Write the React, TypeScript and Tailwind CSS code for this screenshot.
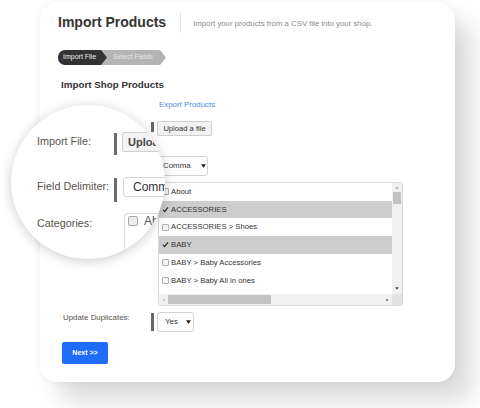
import React from "react";

const Tri = ({ className = "" }: { className?: string }) => (
  <svg viewBox="0 0 6 4" className={className}>
    <path d="M0 0h6L3 4z" fill="currentColor" />
  </svg>
);

const Check = () => (
  <svg viewBox="0 0 8 8" className="w-[7px] h-[7px]">
    <path d="M1.2 4.3 3.1 6.2 6.8 1.6" fill="none" stroke="#333" strokeWidth="1.5" />
  </svg>
);

const rows = [
  { t: "About", c: false },
  { t: "ACCESSORIES", c: true },
  { t: "ACCESSORIES > Shoes", c: false },
  { t: "BABY", c: true },
  { t: "BABY > Baby Accessories", c: false },
  { t: "BABY > Baby All in ones", c: false },
];

export default function App() {
  return (
    <div className="relative w-[480px] h-[408px] bg-white overflow-hidden font-['Liberation_Sans',Arial,sans-serif] text-[#333]">
      <div className="pt-[2px] pl-[40px]">
        <div className="w-[415px] h-[380px] bg-white rounded-[18px] shadow-[0_0_8px_rgba(0,0,0,0.06),18px_20px_24px_rgba(0,0,0,0.14)] pl-[18px] pt-[10px]">
          {/* header */}
          <div className="flex items-center h-[21px]">
            <div className="text-[14px] leading-[17px] font-bold text-[#333]">Import Products</div>
            <div className="ml-[14px] w-px h-[21px] bg-[#e6e6e6]" />
            <div className="ml-[12px] mt-[3px] text-[7.8px] leading-[10px] text-[#8a8a8a]">
              Import your products from a CSV file into your shop.
            </div>
          </div>
          {/* breadcrumb */}
          <div className="flex mt-[17px] h-[15px]">
            <div className="relative z-10 h-[15px] w-[49px] bg-[#333] rounded-l-[7px] pl-[5px] flex items-center text-[7px] text-[#eee] [clip-path:polygon(0_0,calc(100%-6px)_0,100%_50%,calc(100%-6px)_100%,0_100%)]">
              Import File
            </div>
            <div className="-ml-[6px] h-[15px] w-[65px] bg-[#b4b4b4] pl-[12px] flex items-center text-[7px] text-[#e4e4e4] [clip-path:polygon(0_0,calc(100%-6px)_0,100%_50%,calc(100%-6px)_100%,0_100%)]">
              Select Fields
            </div>
          </div>
          <div className="mt-[14px] ml-[3px] text-[9.8px] leading-[12px] font-bold text-[#333]">Import Shop Products</div>

          {/* form */}
          <div className="ml-[5px]">
            <div className="flex mt-[9px]">
              <div className="w-[88px] shrink-0" />
              <div className="w-[3px] shrink-0" />
              <div className="ml-[5px] text-[7.9px] leading-[10px] text-[#4a8ee6]">Export Products</div>
            </div>

            <div className="flex mt-[11px] h-[15px]">
              <div className="w-[88px] shrink-0 text-[7.9px] text-[#555]">Import File:</div>
              <div className="w-[3px] shrink-0 h-[10px] mt-[1px] bg-[#666]" />
              <div className="ml-[3px] h-[15px] w-[55px] border border-[#cfcfcf] bg-[#f1f1f1] rounded-[2px] flex items-center justify-center text-[7.6px] text-[#333] whitespace-nowrap">
                Upload a file
              </div>
            </div>

            <div className="flex mt-[20px] h-[20px]">
              <div className="w-[88px] shrink-0 text-[7.9px] text-[#555]">Field Delimiter:</div>
              <div className="w-[3px] shrink-0 h-[18px] mt-[1px] bg-[#666]" />
              <div className="ml-[3px] h-[20px] w-[51px] border border-[#d4d4d4] bg-white rounded-[3px] flex items-center pl-[5px] text-[7.9px] text-[#333]">
                Comma
                <Tri className="ml-[10px] w-[5px] h-[4px] text-[#222]" />
              </div>
            </div>

            <div className="flex mt-[6px]">
              <div className="w-[88px] shrink-0 text-[7.9px] text-[#555]">Categories:</div>
              <div className="w-[3px] shrink-0" />
              <div className="ml-[4px] w-[245px] h-[124px] border border-[#dadada] rounded-[3px] flex flex-col overflow-hidden">
                <div className="flex flex-1 min-h-0">
                  <div className="flex-1">
                    {rows.map((r) => (
                      <div
                        key={r.t}
                        className={
                          "h-[17.7px] flex items-center pl-[3px] text-[7.7px] text-[#333] " +
                          (r.c ? "bg-[#cdcdcd]" : "bg-white")
                        }
                      >
                        {r.c ? (
                          <div className="w-[7px] h-[7px] flex items-center justify-center">
                            <Check />
                          </div>
                        ) : (
                          <div className="w-[7px] h-[7px] border border-[#b0b0b0] bg-[#f4f4f4] rounded-[1px]" />
                        )}
                        <span className="ml-[2px]">{r.t}</span>
                      </div>
                    ))}
                  </div>
                  <div className="w-[10px] bg-[#f1f1f1] flex flex-col items-center">
                    <Tri className="mt-[3px] w-[4px] h-[3px] rotate-180 text-[#b5b5b5]" />
                    <div className="mt-[3px] w-[8px] h-[12px] bg-[#c2c2c2]" />
                    <div className="flex-1" />
                    <Tri className="mb-[4px] w-[4px] h-[3px] text-[#555]" />
                  </div>
                </div>
                <div className="h-[11px] flex bg-[#f1f1f1] items-center">
                  <div className="w-[9px] flex justify-center">
                    <Tri className="w-[3px] h-[4px] rotate-90 text-[#b5b5b5]" />
                  </div>
                  <div className="w-[103px] h-[9px] bg-[#c2c2c2]" />
                  <div className="flex-1" />
                  <div className="w-[10px] flex justify-center">
                    <Tri className="w-[3px] h-[4px] -rotate-90 text-[#555]" />
                  </div>
                  <div className="w-[10px] h-[11px] bg-[#e2e2e2]" />
                </div>
              </div>
            </div>

            <div className="flex mt-[6px] h-[20px]">
              <div className="w-[88px] shrink-0 pt-[1px] text-[7.9px] leading-[10px] text-[#5a534c]">Update Duplicates:</div>
              <div className="w-[3px] shrink-0 h-[18px] mt-[1px] bg-[#666]" />
              <div className="ml-[3px] h-[20px] w-[37px] border border-[#d4d4d4] bg-white rounded-[3px] flex items-center pl-[7px] text-[7.9px] text-[#333]">
                Yes
                <Tri className="ml-[8px] w-[5px] h-[4px] text-[#222]" />
              </div>
            </div>

            <div className="mt-[10px] -ml-[1px] w-[46px] h-[22px] bg-[#1f6cfb] rounded-[2px] flex items-center justify-center text-[7px] font-bold text-white">
              Next &gt;&gt;
            </div>
          </div>
        </div>
      </div>

      {/* magnifier */}
      <div className="absolute left-[11px] top-[105px] w-[154px] h-[154px] rounded-full bg-white overflow-hidden shadow-[0_2px_12px_rgba(0,0,0,0.2)]">
        <div className="pl-[26px] pt-[27px] w-[260px]">
          <div className="flex h-[22px]">
            <div className="w-[77px] shrink-0 mt-[2.5px] text-[10.8px] leading-[13px] text-[#5a534c] whitespace-nowrap">Import File:</div>
            <div className="w-[3px] shrink-0 h-[22px] mt-[1px] bg-[#6a6a6a]" />
            <div className="ml-[5px] shrink-0 h-[20px] px-[5px] border border-[#cfcfcf] bg-[#f3f3f3] rounded-[2px] flex items-center text-[11px] font-bold text-[#444] whitespace-nowrap">
              Upload a file
            </div>
          </div>
          <div className="flex mt-[23px] h-[25px]">
            <div className="w-[77px] shrink-0 mt-[2.5px] text-[10.8px] leading-[13px] text-[#5a534c] whitespace-nowrap">Field Delimiter:</div>
            <div className="w-[3px] shrink-0 h-[24px] mt-[1px] bg-[#6a6a6a]" />
            <div className="ml-[6px] shrink-0 h-[20px] w-[70px] border border-[#d4d4d4] bg-white rounded-[3px] flex items-center pl-[9px] text-[12px] text-[#333] whitespace-nowrap">
              Comma
            </div>
          </div>
          <div className="flex mt-[11px]">
            <div className="w-[77px] shrink-0 mt-[3.5px] text-[10.8px] leading-[13px] text-[#5a534c] whitespace-nowrap">Categories:</div>
            <div className="ml-[10px] shrink-0 w-[80px] h-[40px] border border-[#dadada] rounded-tl-[4px] pl-[3px] pt-[2px] flex items-start">
              <div className="w-[10px] h-[10px] shrink-0 border border-[#aaa] bg-[#ececec] rounded-[2px]" />
              <span className="ml-[6px] -mt-[1px] text-[12px] leading-[13px] text-[#555] whitespace-nowrap">About</span>
            </div>
          </div>
        </div>
      </div>
    </div>
  );
}
